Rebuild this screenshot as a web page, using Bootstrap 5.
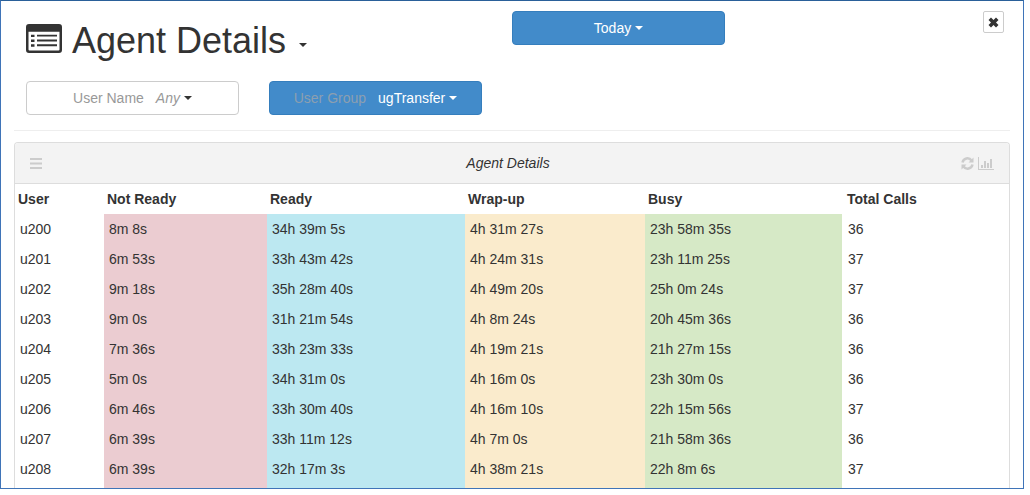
<!DOCTYPE html>
<html lang="en">
<head>
  <meta charset="UTF-8">
  <title>Agent Details</title>
  <link href="https://cdn.jsdelivr.net/npm/bootstrap@5.3.2/dist/css/bootstrap.min.css" rel="stylesheet" />
  <style>
    html, body { background: #fff; overflow: hidden; }
    body { font-family: "Liberation Sans", Arial, sans-serif; font-size: 14px; color: #333; }
    .frame {
      width: 1024px; height: 489px; overflow: hidden;
      border: 1px solid #3f74b8; border-top: 1px solid #2a6099;
    }
    .head-row { height: 80px; padding: 10px 19px 0 25px; }
    .title-block { width: 486px; padding-top: 8px; }
    .title-block h1 { font-size: 36px; line-height: 44px; font-weight: 400; color: #333; margin: 0 0 0 10px; }
    .title-icon { margin-bottom: 5px; }
    .title-caret { display: inline-block; margin: 8px 0 0 13px; border-top: 4px solid #333; border-left: 4px solid transparent; border-right: 4px solid transparent; }
    .btn-pick {
      width: 213px; height: 34px; padding: 0; font-size: 14px; border-radius: 4px;
      display: flex; align-items: center; justify-content: center;
    }
    .btn-pick.dropdown-toggle::after { margin-left: 4px; border-top-width: 4px; border-left-width: 4px; border-right-width: 4px; }
    .btn-blue, .btn-blue:hover { background: #428bca; border: 1px solid #357ebd; color: #fff; }
    .btn-plain, .btn-plain:hover { background: #fff; border: 1px solid #ccc; color: #999; }
    .btn-plain.dropdown-toggle::after { color: #333; }
    .btn-close-x {
      width: 21px; height: 22px; padding: 0; background: #fff; border: 1px solid #ccc; border-radius: 2px;
      display: flex; align-items: center; justify-content: center;
    }
    .filter-row { padding-left: 25px; gap: 30px; height: 49px; }
    .lbl-muted { color: #999; margin-right: 12px; }
    .lbl-blue { color: #8c9fb0; margin-right: 12px; }
    .lbl-any { font-style: italic; }
    .rule { height: 1px; background: #eee; margin: 0 13px 11px 13px; }
    .grid-panel { width: 996px; margin-left: 13px; border: 1px solid #ddd; border-bottom: 0; border-radius: 4px 4px 0 0; }
    .grid-head { height: 41px; background: #f3f3f3; border-bottom: 1px solid #ddd; padding: 0 15px; border-radius: 3px 3px 0 0; }
    .grid-head em { font-size: 14px; color: #333; margin-right: 8px; }
    .head-side { flex: 1 1 0; }
    .agent-table { table-layout: fixed; width: 994px; margin: 0; font-size: 14px; --bs-table-color: #333; }
    .agent-table th { height: 30px; padding: 0 3px; font-weight: 700; vertical-align: middle; }
    .agent-table td { height: 30px; padding: 0 5px; vertical-align: middle; }
    .agent-table th.th-last { padding-left: 5px; }
    .agent-table td.td-last { padding-left: 6px; }
    .w-user { width: 89px; } .w-not { width: 163px; } .w-ready { width: 198px; }
    .w-wrap { width: 180px; } .w-busy { width: 197px; } .w-total { width: 167px; }
    .agent-table td.c-red { --bs-table-bg: #ebccd1; }
    .agent-table td.c-blue { --bs-table-bg: #bce8f1; }
    .agent-table td.c-yellow { --bs-table-bg: #faebcc; }
    .agent-table td.c-green { --bs-table-bg: #d6e9c6; }
  </style>
</head>
<body>
<div class="frame">
  <!-- Title, period, close -->
  <div class="head-row d-flex align-items-start">
    <div class="title-block d-flex align-items-center">
      <svg class="title-icon" width="36" height="29" viewBox="0 0 36 30" preserveAspectRatio="none">
        <path fill="#333" fill-rule="evenodd" d="M3 0h30a3 3 0 0 1 3 3v24a3 3 0 0 1-3 3H3a3 3 0 0 1-3-3V3a3 3 0 0 1 3-3zM2.500 8v18.500a1 1 0 0 0 1 1h29a1 1 0 0 0 1-1V8z"/>
        <path fill="#333" d="M5 11h3.500v2.500H5zM11 11h20v2H11zM5 16h3.500v2.500H5zM11 16h20v2H11zM5 21h3.500v2.500H5zM11 21h20v2H11z"/>
      </svg>
      <h1>Agent Details</h1>
      <span class="title-caret"></span>
    </div>
    <button type="button" class="btn btn-pick btn-blue dropdown-toggle">Today</button>
    <button type="button" class="btn btn-close-x ms-auto" aria-label="Close">
      <svg width="11" height="11" viewBox="0 0 11 11"><path fill="#333" d="M3 .5 5.500 3 8 .5 10.500 3 8 5.500 10.500 8 8 10.500 5.500 8 3 10.500 .5 8 3 5.500 .5 3z"/></svg>
    </button>
  </div>

  <!-- Filters -->
  <div class="filter-row d-flex align-items-start">
    <button type="button" class="btn btn-pick btn-plain dropdown-toggle"><span class="lbl-muted">User Name</span><span class="lbl-any">Any</span></button>
    <button type="button" class="btn btn-pick btn-blue dropdown-toggle"><span class="lbl-blue">User Group</span><span>ugTransfer</span></button>
  </div>
  <div class="rule"></div>

  <!-- Panel -->
  <div class="grid-panel">
    <div class="grid-head d-flex align-items-center">
      <span class="head-side d-flex">
        <svg width="12" height="11" viewBox="0 0 12 11"><path fill="#ccc" d="M0 0h12v2H0zM0 4.500h12v2H0zM0 9h12v2H0z"/></svg>
      </span>
      <em>Agent Details</em>
      <span class="head-side d-flex align-items-center justify-content-end gap-1">
        <svg width="13" height="13" viewBox="0 0 13 13">
          <path fill="none" stroke="#ccc" stroke-width="2.500" d="M1.500 5.500A5 5 0 0 1 10.500 3.500M11.500 7.500A5 5 0 0 1 2.500 9.500"/>
          <path fill="#ccc" d="M12.500 .5v5h-5zM.5 12.500v-5h5z"/>
        </svg>
        <svg width="16" height="13" viewBox="0 0 16 13"><path fill="#ccc" d="M0 0h1v12h15v1H0zM3 8h2v3H3zM6 4h2v7H6zM9 6h2v5H9zM12 2h2v9h-2z"/></svg>
      </span>
    </div>
    <table class="table table-borderless agent-table">
      <colgroup>
        <col class="w-user"><col class="w-not"><col class="w-ready"><col class="w-wrap"><col class="w-busy"><col class="w-total">
      </colgroup>
      <thead>
        <tr><th>User</th><th>Not Ready</th><th>Ready</th><th>Wrap-up</th><th>Busy</th><th class="th-last">Total Calls</th></tr>
      </thead>
      <tbody>
        <tr><td>u200</td><td class="c-red">8m 8s</td><td class="c-blue">34h 39m 5s</td><td class="c-yellow">4h 31m 27s</td><td class="c-green">23h 58m 35s</td><td class="td-last">36</td></tr>
        <tr><td>u201</td><td class="c-red">6m 53s</td><td class="c-blue">33h 43m 42s</td><td class="c-yellow">4h 24m 31s</td><td class="c-green">23h 11m 25s</td><td class="td-last">37</td></tr>
        <tr><td>u202</td><td class="c-red">9m 18s</td><td class="c-blue">35h 28m 40s</td><td class="c-yellow">4h 49m 20s</td><td class="c-green">25h 0m 24s</td><td class="td-last">37</td></tr>
        <tr><td>u203</td><td class="c-red">9m 0s</td><td class="c-blue">31h 21m 54s</td><td class="c-yellow">4h 8m 24s</td><td class="c-green">20h 45m 36s</td><td class="td-last">36</td></tr>
        <tr><td>u204</td><td class="c-red">7m 36s</td><td class="c-blue">33h 23m 33s</td><td class="c-yellow">4h 19m 21s</td><td class="c-green">21h 27m 15s</td><td class="td-last">36</td></tr>
        <tr><td>u205</td><td class="c-red">5m 0s</td><td class="c-blue">34h 31m 0s</td><td class="c-yellow">4h 16m 0s</td><td class="c-green">23h 30m 0s</td><td class="td-last">36</td></tr>
        <tr><td>u206</td><td class="c-red">6m 46s</td><td class="c-blue">33h 30m 40s</td><td class="c-yellow">4h 16m 10s</td><td class="c-green">22h 15m 56s</td><td class="td-last">37</td></tr>
        <tr><td>u207</td><td class="c-red">6m 39s</td><td class="c-blue">33h 11m 12s</td><td class="c-yellow">4h 7m 0s</td><td class="c-green">21h 58m 36s</td><td class="td-last">36</td></tr>
        <tr><td>u208</td><td class="c-red">6m 39s</td><td class="c-blue">32h 17m 3s</td><td class="c-yellow">4h 38m 21s</td><td class="c-green">22h 8m 6s</td><td class="td-last">37</td></tr>
        <tr><td></td><td class="c-red"></td><td class="c-blue"></td><td class="c-yellow"></td><td class="c-green"></td><td></td></tr>
      </tbody>
    </table>
  </div>
</div>
<script src="https://cdn.jsdelivr.net/npm/bootstrap@5.3.2/dist/js/bootstrap.bundle.min.js"></script>
</body>
</html>
